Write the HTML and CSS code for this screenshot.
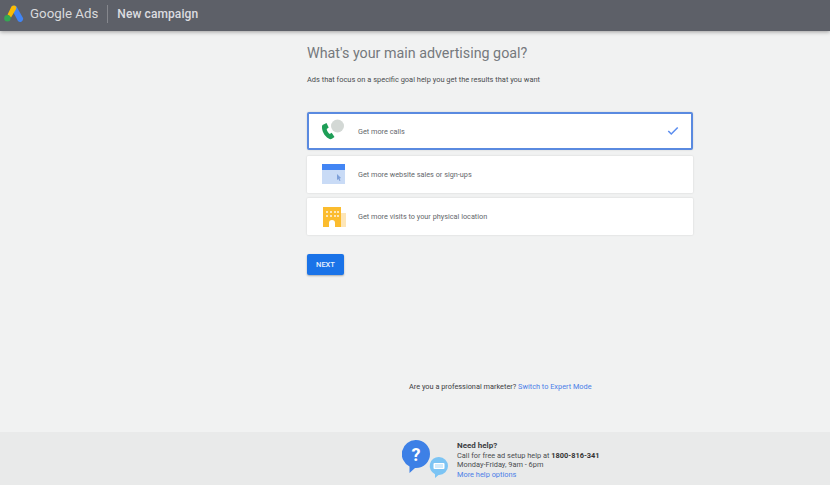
FILE: index.html
```html
<!DOCTYPE html>
<html lang="en">
<head>
  <meta charset="UTF-8" />
  <meta name="viewport" content="width=device-width, initial-scale=1.0"/>
  <title>New campaign</title>
  <link rel="stylesheet" href="styles.css">
</head>
<body>
  <header class="topbar">
    <svg class="logo" width="20" height="17" viewBox="0 0 20 17">
      <path d="M7.5 1.5 11 0.5l1.5 1L19 13a3 3 0 0 1-5 3L7.5 4z" fill="#4285f4"/>
      <path d="M7.5 1.5a3 3 0 0 1 4.5 0c.6 1 .4 2-.2 3L7 12.5 3.6 9.6z" fill="#fbbc04"/>
      <circle cx="3.4" cy="13.2" r="3.2" fill="#34a853"/>
    </svg>
    <span class="brand">Google Ads</span>
    <span class="divider"></span>
    <span class="page-name">New campaign</span>
  </header>

  <main class="content">
    <h1>What's your main advertising goal?</h1>
    <p class="sub">Ads that focus on a specific goal help you get the results that you want</p>

    <div class="goals">
      <div class="goal selected">
        <svg class="goal-icon" width="28" height="24" viewBox="0 0 28 24">
          <circle cx="17.5" cy="7" r="6.5" fill="#d3d8d5"/>
          <path d="M3.5 5.5 6.5 4l2.2 4.6-2 1.4c.3 2 1.4 3.8 3 5l2-1.2 2.8 4.2-2.6 1.8c-1 .6-2.2.5-3.2-.2C4 16.6 1.8 12 2 7.5c0-.9.6-1.6 1.5-2z" fill="#1e9e57"/>
        </svg>
        <span class="goal-text">Get more calls</span>
        <svg class="check" width="12" height="10" viewBox="0 0 14 11">
          <path d="M1.5 5.5 5 9l7.5-7.5" fill="none" stroke="#5b8def" stroke-width="1.8"/>
        </svg>
      </div>
      <div class="goal">
        <svg class="goal-icon" width="24" height="20" viewBox="0 0 24 20">
          <rect y="4" width="23" height="16" fill="#c9dbf6"/>
          <rect width="23" height="6" fill="#4285f4"/>
          <path d="M15 10l4 4-1.5.5 1 2-1 .5-1-2-1.5 1z" fill="#7d9fd8"/>
        </svg>
        <span class="goal-text">Get more website sales or sign-ups</span>
      </div>
      <div class="goal">
        <svg class="goal-icon" width="24" height="20" viewBox="0 0 24 20">
          <rect x="17" y="6" width="7" height="14" fill="#fde6b8"/>
          <path d="M1 0h18v20h-6v-4a3 3 0 0 0-6 0v4H1z" fill="#fbbc2e"/>
          <path d="M4 4h2v2H4zm4 0h2v2H8zm4 0h2v2h-2zm3 0h2v2h-2zM4 8h2v2H4zm4 0h2v2H8zm4 0h2v2h-2zm3 0h2v2h-2z" fill="#fde6b8"/>
        </svg>
        <span class="goal-text">Get more visits to your physical location</span>
      </div>
    </div>

    <button class="next">NEXT</button>

    <p class="expert">Are you a professional marketer? <a href="#">Switch to Expert Mode</a></p>
  </main>

  <footer class="help">
    <svg class="help-icon" width="50" height="38" viewBox="0 0 50 38">
      <path d="M14 0a14 14 0 0 1 0 28h-1l-5.5 5v-6.5A14 14 0 0 1 14 0z" fill="#3d80e6"/>
      <text x="14" y="20.5" class="qmark">?</text>
      <path d="M37 17a9 9 0 0 1 0 18h-.5l-3.5 3v-3.8A9 9 0 0 1 37 17z" fill="#7cc4f4"/>
      <rect x="31.5" y="23" width="11" height="6" rx="1" fill="#fff"/>
      <path d="M33 25h8M33 27h8" stroke="#7cc4f4" stroke-width=".7"/>
    </svg>
    <div class="help-text">
      <strong>Need help?</strong>
      <span>Call for free ad setup help at <b>1800-816-341</b></span>
      <span>Monday-Friday, 9am - 6pm</span>
      <a href="#">More help options</a>
    </div>
  </footer>
</body>
</html>
```

FILE: styles.css
```css
* { box-sizing:border-box; }
html, body { height:100%; }
body { margin:0; background:#f1f2f2; color:#3c4043; font-family:Roboto,"Liberation Sans",sans-serif; display:flex; flex-direction:column; height:485px; overflow:hidden; }
a { color:#4a80e8; text-decoration:none; }

.topbar { height:31px; flex:none; background:#5d6068; color:#e4e5e7; display:flex; align-items:center; padding:0 0 4px 4px; box-shadow:0 1px 4px rgba(0,0,0,0.35); }
.logo { margin-right:6px; }
.brand { font-size:13.3px; color:#d9dadc; }
.divider { width:1px; height:18px; background:#85878d; margin:0 9px; }
.page-name { font-size:12px; font-weight:500; letter-spacing:.1px; color:#dcdde0; }

.content { flex:1; width:386px; margin-left:307px; display:flex; flex-direction:column; }
h1 { font-size:14.3px; font-weight:400; color:#75797d; margin:12px 0 0; line-height:20px; }
.sub { font-size:7.45px; color:#4a4d50; margin:12px 0 0; line-height:10px; }

.goals { display:flex; flex-direction:column; gap:5.5px; margin-top:27px; }
.goal { height:37px; background:#fff; display:flex; align-items:center; padding-left:13px; box-shadow:0 0 2px rgba(0,0,0,0.15); border-radius:1px; }
.goal.selected { height:38px; border:2px solid #5a8ae0; border-radius:2px; padding-left:11px; }
.goal-icon { width:28px; margin-right:10px; flex:none; }
.goal-text { font-size:7.3px; color:#64686c; }
.check { margin-left:auto; margin-right:12px; }

.next { align-self:flex-start; width:37px; height:21px; margin-top:18.5px; border:none; border-radius:2px; background:#1a73e8; color:#e8f0fe; font:500 7.5px Roboto,"Liberation Sans",sans-serif; box-shadow:0 1px 2px rgba(0,0,0,0.3); padding:0; }

.expert { font-size:7.35px; margin:107px 0 0 102px; color:#3c4043; }

.help { height:53px; flex:none; background:#e9eaea; display:flex; padding:8px 0 0 402px; }
.help-icon { margin-right:5px; }
.qmark { font:700 18px Roboto,"Liberation Sans",sans-serif; fill:#fff; text-anchor:middle; }
.help-text { display:flex; flex-direction:column; font-size:7.4px; line-height:9.5px; color:#4a4d50; padding-top:1px; }
.help-text strong { color:#3c4043; font-size:8px; }
.help-text b { color:#333; }
```
